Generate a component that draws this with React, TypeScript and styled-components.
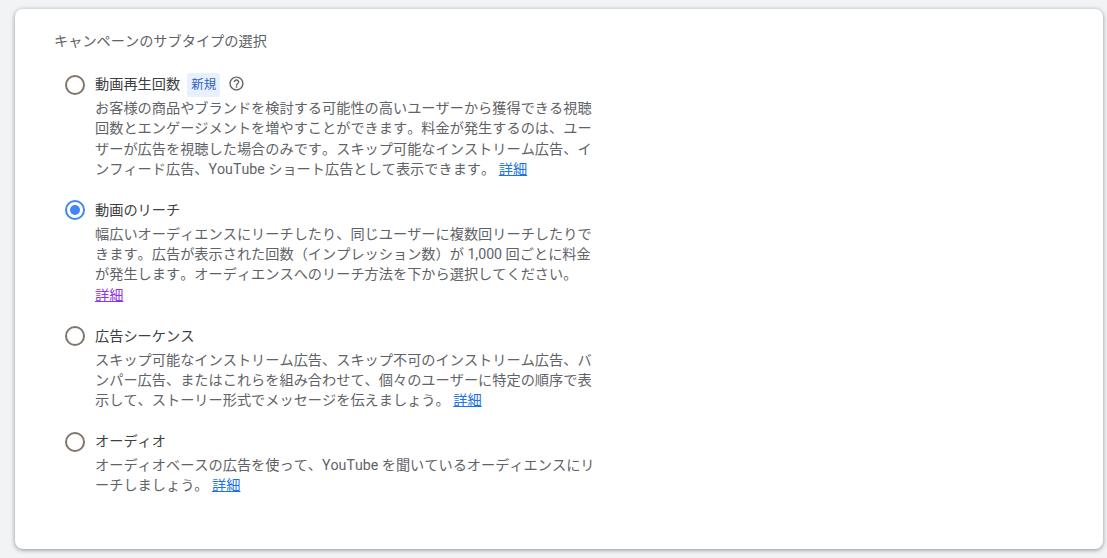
import React from "react";
import styled, { createGlobalStyle } from "styled-components";

const Global = createGlobalStyle`
  html, body { margin: 0; padding: 0; background: #f1f3f4; }
  body { width: 1107px; height: 558px; overflow: hidden; font-family: Roboto, "Noto Sans CJK JP", sans-serif; font-kerning: none; }
`;
const Page = styled.div`
  padding: 9px 4px 9px 15px;
  height: 558px;
  box-sizing: border-box;
`;
const Card = styled.section`
  background: #fff;
  border-radius: 8px;
  height: 540px;
  box-sizing: border-box;
  padding: 22px 0 0 40px;
  box-shadow: 0 1px 4px rgba(60, 64, 67, 0.55);
`;
const Heading = styled.div`
  font-size: 14.2px;
  line-height: 20px;
  color: #5f6368;
  margin: 0 0 20px -1px;
`;
const Options = styled.div`
  display: flex;
  flex-direction: column;
  gap: 17.6px;
`;
const Option = styled.div`
  display: flex;
  gap: 10px;
  padding-left: 10px;
`;
const Radio = styled.span<{ $checked?: boolean }>`
  width: 20px;
  height: 20px;
  box-sizing: border-box;
  border-radius: 50%;
  border: 2px solid ${(p) => (p.$checked ? "#4285f4" : "#80766c")};
  display: flex;
  align-items: center;
  justify-content: center;
  flex: none;
  margin-top: 3.5px;
  &::after {
    content: "";
    display: ${(p) => (p.$checked ? "block" : "none")};
    width: 10px;
    height: 10px;
    border-radius: 50%;
    background: #4285f4;
  }
`;
const Body = styled.div`
  width: 500px;
`;
const TitleRow = styled.div`
  display: flex;
  align-items: center;
  height: 24px;
  font-size: 14.2px;
  color: #3c4043;
  margin-bottom: 3px;
`;
const Badge = styled.span`
  background: #e8f0fe;
  color: #2f5fc4;
  font-size: 12.5px;
  line-height: 24px;
  padding: 0 4px;
  border-radius: 3px;
  margin: 3px 0 0 7px;
`;
const Help = styled.svg`
  width: 17px;
  height: 17px;
  margin-left: 8px;
`;
const Description = styled.p`
  margin: 0;
  font-size: 14.2px;
  line-height: 20.3px;
  color: #5f6368;
`;
const More = styled.a<{ $visited?: boolean }>`
  color: ${(p) => (p.$visited ? "#9334e6" : "#1a73e8")};
  text-decoration: underline;
`;

const options = [
  {
    title: "動画再生回数",
    isNew: true,
    text: "お客様の商品やブランドを検討する可能性の高いユーザーから獲得できる視聴回数とエンゲージメントを増やすことができます。料金が発生するのは、ユーザーが広告を視聴した場合のみです。スキップ可能なインストリーム広告、インフィード広告、YouTube ショート広告として表示できます。",
  },
  {
    title: "動画のリーチ",
    checked: true,
    visited: true,
    text: "幅広いオーディエンスにリーチしたり、同じユーザーに複数回リーチしたりできます。広告が表示された回数（インプレッション数）が 1,000 回ごとに料金が発生します。オーディエンスへのリーチ方法を下から選択してください。",
  },
  {
    title: "広告シーケンス",
    text: "スキップ可能なインストリーム広告、スキップ不可のインストリーム広告、バンパー広告、またはこれらを組み合わせて、個々のユーザーに特定の順序で表示して、ストーリー形式でメッセージを伝えましょう。",
  },
  {
    title: "オーディオ",
    text: "オーディオベースの広告を使って、YouTube を聞いているオーディエンスにリーチしましょう。",
  },
];

export default function App() {
  return (
    <Page>
      <Global />
      <Card>
        <Heading>キャンペーンのサブタイプの選択</Heading>
        <Options>
          {options.map((o) => (
            <Option key={o.title}>
              <Radio $checked={o.checked} />
              <Body>
                <TitleRow>
                  {o.title}
                  {o.isNew && <Badge>新規</Badge>}
                  {o.isNew && (
                    <Help viewBox="0 0 24 24" fill="#5f6368">
                      <path d="M11 18h2v-2h-2v2zm1-16C6.48 2 2 6.48 2 12s4.48 10 10 10 10-4.48 10-10S17.52 2 12 2zm0 18c-4.41 0-8-3.59-8-8s3.59-8 8-8 8 3.59 8 8-3.59 8-8 8zm0-14c-2.21 0-4 1.79-4 4h2c0-1.1.9-2 2-2s2 .9 2 2c0 2-3 1.75-3 5h2c0-2.25 3-2.5 3-5 0-2.21-1.79-4-4-4z" />
                    </Help>
                  )}
                </TitleRow>
                <Description>
                  {o.text}
                  {o.visited ? <br /> : " "}
                  <More $visited={o.visited}>詳細</More>
                </Description>
              </Body>
            </Option>
          ))}
        </Options>
      </Card>
    </Page>
  );
}
